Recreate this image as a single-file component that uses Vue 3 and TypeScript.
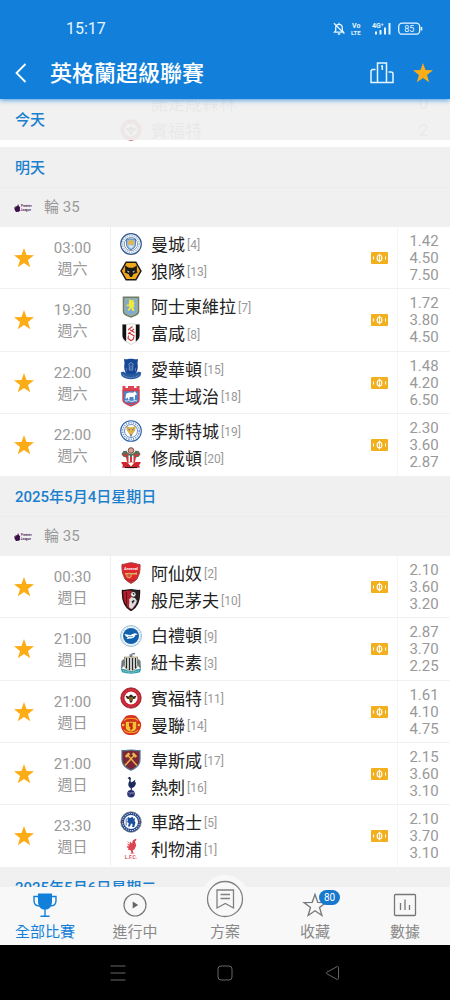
<script setup lang="ts">
interface Team {
  name: string
  rank: number
  crest: string
}

interface Match {
  time: string
  day: string
  home: Team
  away: Team
  odds: string[]
}

interface Matchday {
  date: string
  round: string
  matches: Match[]
}

const team = (name: string, rank: number, crest: string): Team => ({ name, rank, crest })

const matchdays: Matchday[] = [
  {
    date: '明天',
    round: '輪 35',
    matches: [
      { time: '03:00', day: '週六', home: team('曼城', 4, 'mci'), away: team('狼隊', 13, 'wol'), odds: ['1.42', '4.50', '7.50'] },
      { time: '19:30', day: '週六', home: team('阿士東維拉', 7, 'avl'), away: team('富咸', 8, 'ful'), odds: ['1.72', '3.80', '4.50'] },
      { time: '22:00', day: '週六', home: team('愛華頓', 15, 'eve'), away: team('葉士域治', 18, 'ips'), odds: ['1.48', '4.20', '6.50'] },
      { time: '22:00', day: '週六', home: team('李斯特城', 19, 'lei'), away: team('修咸頓', 20, 'sou'), odds: ['2.30', '3.60', '2.87'] },
    ],
  },
  {
    date: '2025年5月4日星期日',
    round: '輪 35',
    matches: [
      { time: '00:30', day: '週日', home: team('阿仙奴', 2, 'ars'), away: team('般尼茅夫', 10, 'bou'), odds: ['2.10', '3.60', '3.20'] },
      { time: '21:00', day: '週日', home: team('白禮頓', 9, 'bha'), away: team('紐卡素', 3, 'new'), odds: ['2.87', '3.70', '2.25'] },
      { time: '21:00', day: '週日', home: team('賓福特', 11, 'bre'), away: team('曼聯', 14, 'mun'), odds: ['1.61', '4.10', '4.75'] },
      { time: '21:00', day: '週日', home: team('韋斯咸', 17, 'whu'), away: team('熱刺', 16, 'tot'), odds: ['2.15', '3.60', '3.10'] },
      { time: '23:30', day: '週日', home: team('車路士', 5, 'che'), away: team('利物浦', 1, 'liv'), odds: ['2.10', '3.70', '3.10'] },
    ],
  },
  { date: '2025年5月6日星期二', round: '', matches: [] },
]
</script>

<template>
  <div class="app">
    <svg class="sprite" aria-hidden="true">
      <symbol id="i-star" viewBox="0 0 20 20">
        <path fill="#fcac14" d="M10 0l2.5 7.1 7.5.2-6 4.6 2.200 7.300L10 14.900l-6.200 4.300L6 11.900 0 7.300l7.500-.2z" />
      </symbol>
      <symbol id="i-cash" viewBox="0 0 17 12">
        <rect width="17" height="12" rx="1" fill="#f2af1e" />
        <path d="M2.500 4.500v3M14.500 4.500v3" stroke="#fff" stroke-width="1" />
        <ellipse cx="8.500" cy="6" rx="2.300" ry="3" fill="none" stroke="#fff" stroke-width="1.200" />
        <path d="M8.500 1.600v8.800" stroke="#fff" stroke-width=".9" />
      </symbol>

      <symbol id="c-mci" viewBox="0 0 22 22">
        <circle cx="11" cy="11" r="10.300" fill="#fff" stroke="#35598c" stroke-width="1.200" />
        <circle cx="11" cy="11" r="8.300" fill="none" stroke="#a9c4de" stroke-width="1.800" stroke-dasharray="1.500 .8" />
        <circle cx="11" cy="11" r="6.600" fill="#fff" stroke="#35598c" stroke-width=".6" />
        <path d="M6.500 6h9v5.500c0 2.800-2 4.300-4.500 5.200-2.500-.9-4.500-2.400-4.500-5.200z" fill="#8dbce2" stroke="#35598c" stroke-width=".7" />
        <path d="M7.500 11l1-3 2.500-1.500L13.500 8l1 3-.5.800H8z" fill="#e0b658" />
        <path d="M8 12.500h6l-3 3z" fill="#dcebf6" />
      </symbol>
      <symbol id="c-wol" viewBox="0 0 22 22">
        <path d="M5.700 1.500h10.600L21.800 11l-5.500 9.500H5.700L.2 11z" fill="#1c1b1a" />
        <path d="M6.500 3h9l4.600 8-4.600 8h-9l-4.600-8z" fill="#f0a81c" />
        <path d="M5 5.500l4 2.300h4l4-2.300-.2 5.500.7 1.500-4.300 1.800L12 17h-2l-1.200-2.700-4.300-1.800.7-1.500z" fill="#1c1b1a" />
        <path d="M7 10.600l2.700 1.400-1.500.500zM15 10.600l-2.700 1.400 1.500.500z" fill="#fff" />
      </symbol>
      <symbol id="c-avl" viewBox="0 0 22 22">
        <path d="M3.500 1.200h15v14.500c0 3-3.500 3.600-7.500 5.300-4-1.700-7.500-2.300-7.500-5.300z" fill="#7fa9d2" stroke="#707c66" stroke-width="1.500" />
        <path d="M5 3h12v12.500c0 2-3 2.700-6 3.900-3-1.200-6-1.900-6-3.900z" fill="none" stroke="#b3b86f" stroke-width=".7" />
        <path d="M9 3.500l2.700.7 2.500.1-.8 2 1.900 1-1.500.8.600 2.700-1.100.7 1.400 3.800-2.500-.5-1-2.800-2 2.800-1.800-.3 2.100-3.300-.8-1.500-1.700.6-.4-1.600 2.300-.5z" fill="#f2e83b" />
      </symbol>
      <symbol id="c-ful" viewBox="0 0 22 22">
        <path d="M2.500 1.500c3 .8 5-.7 8.500-.7s5.500 1.500 8.500.7v11c0 4.500-4.500 7-8.500 8.900-4-1.900-8.500-4.400-8.500-8.900z" fill="#fff" stroke="#999" stroke-width=".4" />
        <path d="M2.500 1.500l3.700-.1v17.100c-2.200-1.500-3.700-3.300-3.700-6zM19.500 1.500l-3.700-.1v17.100c2.200-1.500 3.700-3.300 3.700-6z" fill="#111" />
        <path d="M12.500 3.500L8 7M14 6l-6 5M14.500 9.500L10 7M14.500 13L9 10M8.500 12.500l-.5 3 3 2 2-1 1-3" fill="none" stroke="#cf3237" stroke-width="1.100" />
      </symbol>
      <symbol id="c-eve" viewBox="0 0 22 22">
        <path d="M4 1c2.500.7 4-.3 7-.3s4.500 1 7 .3l-.5 4c1 5-.2 9-2.500 12H7C4.700 14 3.500 10 4.500 5z" fill="#174895" />
        <path d="M.7 14.500l2.600-.9c3.900 3.400 11.500 3.400 15.400 0l2.600.9-.9 3.500c-5.500 4.300-13.300 4.300-18.800 0z" fill="#285aa0" />
        <path d="M3 17c5 3.400 11 3.400 16 0" stroke="#9db6da" fill="none" stroke-width=".7" stroke-dasharray="1 .7" />
        <path d="M9.300 12V7.500L8.800 6 11 4.500 13.200 6l-.5 1.500V12z" fill="none" stroke="#8ea9d6" stroke-width=".8" />
        <path d="M6.500 10v3M15.500 10v3M11 7v4" stroke="#6688c2" stroke-width=".8" />
      </symbol>
      <symbol id="c-ips" viewBox="0 0 22 22">
        <path d="M2.500 1h3v2h2.500V1h6v2h2.500V1h3v4.500h-17z" fill="#de4452" />
        <path d="M3 5.500h16v9.500c0 3.500-4.500 4-8 6-3.500-2-8-2.500-8-6z" fill="#4a82c4" stroke="#d63c4e" stroke-width="1.400" />
        <path d="M5.500 12.500l.8-4 3-1 3.700.3L15 6.300l2 3.200-2 .8v4.200h-1.500v-2.500H9.500v2.500H8v-2.500l-1 1.500H5.500z" fill="#fff" />
        <path d="M5 15.800c2 1 3-.8 4.500 0s3 .8 4.500 0 2 .5 3 0" stroke="#fff" stroke-width=".9" fill="none" />
        <path d="M7.500 18.300h7" stroke="#d63c4e" stroke-width="1" />
      </symbol>
      <symbol id="c-lei" viewBox="0 0 22 22">
        <circle cx="11" cy="11" r="10.300" fill="#fff" stroke="#2860ae" stroke-width="1.100" />
        <circle cx="11" cy="11" r="8.300" fill="none" stroke="#7da0d0" stroke-width="1.700" stroke-dasharray="1.300 1.100" />
        <circle cx="11" cy="11" r="6.500" fill="#fff" stroke="#2860ae" stroke-width=".7" />
        <path d="M6.500 6l2.800 1.500h3.400L15.500 6l-.6 4.500L13 13l-2 3.500L9 13l-1.900-2.500z" fill="#e3b445" stroke="#9a722d" stroke-width=".3" />
        <path d="M8.500 9.300l1.500.8M13.500 9.300l-1.500.8M11 14v2.500" stroke="#2860ae" stroke-width=".9" />
      </symbol>
      <symbol id="c-sou" viewBox="0 0 22 22">
        <circle cx="11" cy="3.500" r="2.800" fill="#d9a08c" stroke="#5c2d29" stroke-width=".8" />
        <path d="M1.500 7l2-3 3-.3L8 6l3 1 3-1 1.500-2.300 3 .3 2 3-1.500 2.500-5 1.500-3-1-3 1-5-1.500z" fill="#55705a" />
        <path d="M2 6.500l2 1 2.500-1 1.500 2.500-4 .5zM20 6.500l-2 1-2.500-1L14 9l4 .5z" fill="#d5343a" />
        <path d="M6 10h10l-1 5H7z" fill="#d5343a" />
        <path d="M8.500 8.500h1.500v7H8.500zM12 8.500h1.500v7H12z" fill="#fff" />
        <path d="M1 15.500c3.300-1 6 .2 10 .2s6.700-1.200 10-.2l-2 2.700 1 2.300c-6 .9-12 .9-18 0l1-2.300z" fill="#cc252d" />
        <path d="M8 16h6l-3 3.500z" fill="#fff" />
        <path d="M5 20.500h12" stroke="#2b1a1b" stroke-width="1.100" />
      </symbol>
      <symbol id="c-ars" viewBox="0 0 22 22">
        <path d="M2 2.500C5 2.500 8 .8 11 .8s6 1.700 9 1.700c.5 8-1.500 15.500-9 18.900C3.500 18 1.500 10.500 2 2.500z" fill="#df2730" stroke="#9d423f" stroke-width="1" />
        <path d="M5 11h9.500l2.500-.8v2.500l-2.500-.3H5z" fill="#dfb15c" />
        <circle cx="9" cy="13.500" r="2.300" fill="#cf5b38" stroke="#e2b35e" stroke-width="1" />
        <path d="M4.500 16.500c2.500 3 10.500 3 13 0" fill="none" stroke="#a91f2b" />
      </symbol>
      <symbol id="c-bou" viewBox="0 0 22 22">
        <path d="M2.500 1.500C5 2 8 .7 11 .7s6 1.300 8.500.8c.4 8-.5 15.500-8.500 20-8-4.500-8.900-12-8.500-20z" fill="#b91d29" stroke="#181616" stroke-width="1.400" />
        <path d="M12 1.200l6.700.6c.3 7-.7 13.500-7.700 18.200z" fill="#242122" />
        <path d="M6.500 3v13.500" stroke="#5c151b" stroke-width="1" />
        <path d="M9.500 19c-1-4 .500-6-.5-8.500l2.500-2.500 3.500 1 2 3-1.500 3.500-3.500 4.500z" fill="#ddd" />
        <circle cx="13.300" cy="5.300" r="2.600" fill="#fff" stroke="#1b1b1b" stroke-width=".6" />
        <path d="M12.400 4.800l1-1 1.200 1-.6 1.400z" fill="#222" />
        <path d="M11.500 12.500l2-1.500 1.500 1-1.500 1-.5 2z" fill="#242122" />
      </symbol>
      <symbol id="c-bha" viewBox="0 0 22 22">
        <circle cx="11" cy="11" r="10.500" fill="#fff" stroke="#84afd1" stroke-width=".8" />
        <circle cx="11" cy="11" r="9.300" fill="none" stroke="#a5c5e0" stroke-width="1" stroke-dasharray="1 .8" />
        <circle cx="11" cy="11" r="8" fill="#1261ad" />
        <path d="M4.500 9c2.500.2 4.500 1.500 6.500.8l3.500-1.600 1.800.4 1.300 1-2.100.3c-1 2.600-3 3.800-5.500 3.500L6.500 14l1.300-1.800C6 11.800 5 10.500 4.500 9z" fill="#fff" />
        <path d="M8 11.500l5 .2" stroke="#1261ad" stroke-width=".6" />
      </symbol>
      <symbol id="c-new" viewBox="0 0 22 22">
        <path d="M9.500 5h3V2.500h2.500V.8l-3.500.4v1H9.500z" fill="#7a8492" />
        <path d="M4.500 5c2 .5 4 0 6.500 0s4.500.5 6.500 0v8c0 3-3.300 5-6.500 6.300C7.800 18 4.500 16 4.500 13z" fill="#fff" stroke="#817442" stroke-width=".8" />
        <path d="M6.500 6v10.500M9.500 6v12M12.500 6v12M15.500 6v10.500" stroke="#272829" stroke-width="1.500" />
        <path d="M1.500 9l2-2 1.500 3-1.500 4.500L1 17zM20.500 9l-2-2-1.500 3 1.500 4.500L21 17z" fill="#6d7b83" />
        <path d="M.8 16.500l5 1c3 2 7.400 2 10.400 0l5-1-1.200 3.700c-5.500 1.900-12.500 1.900-18 0z" fill="#2f9ba9" />
        <path d="M3 18.700c5 2 11 2 16 0" stroke="#d4ecef" stroke-width=".7" fill="none" stroke-dasharray="1 .7" />
      </symbol>
      <symbol id="c-bre" viewBox="0 0 22 22">
        <circle cx="11" cy="11" r="10.200" fill="#c8202f" stroke="#8e1e2a" stroke-width=".8" />
        <circle cx="11" cy="11" r="8.400" fill="none" stroke="#d85563" stroke-width="1" stroke-dasharray="1 .9" />
        <circle cx="11" cy="11" r="6.500" fill="#fff" />
        <path d="M5.500 8.700L9 9.500l1-1.700h2l1 1.700 3.500-.8-1.500 3-2 .3-1 3.500h-2L9 12l-2-.3z" fill="#2d251b" />
        <path d="M9 11h4M9.400 13h3.200" stroke="#e5a72a" stroke-width=".9" />
      </symbol>
      <symbol id="c-mun" viewBox="0 0 22 22">
        <path d="M6 2c3-1.300 7-1.300 10 0l2.500 3 2.500 4c.6 4-1 8-4 10.500-3.500 2-8.500 2-12 0C2 17 .4 13 1 9l2.500-4z" fill="#d9301f" />
        <path d="M4 6.500c2.500-3 11.500-3 14 0M4 16c2.800 3.500 11.200 3.500 14 0" stroke="#f0a92c" stroke-width="1.200" fill="none" />
        <path d="M5.500 7.500h11v6c0 2.500-2.500 3.800-5.500 4.500-3-.7-5.500-2-5.500-4.500z" fill="#f5c530" stroke="#a5241c" stroke-width=".5" />
        <path d="M9 8.500l2 .5 2-.5-.5 3.500.5 2.500-1 .5-1 2-1-2.500.5-1.500-1.500-.5z" fill="#c5241d" />
        <circle cx="3.200" cy="11" r="1.300" fill="#f4c431" />
        <circle cx="18.800" cy="11" r="1.300" fill="#f4c431" />
      </symbol>
      <symbol id="c-whu" viewBox="0 0 22 22">
        <path d="M2 1.500c3 .7 6-.5 9-.5s6 1.200 9 .5v9c0 5-3.500 8.500-9 10.700C5.500 19 2 15.500 2 10.500z" fill="#7d2736" stroke="#507895" stroke-width="1.200" />
        <path d="M5 16.500L14.500 6M17 16.500L7.500 6" stroke="#e8b449" stroke-width="1.500" />
        <path d="M4.800 7.300l3.500-3.800 2 1.500-3.500 3.800zM17.200 7.300l-3.500-3.800-2 1.500 3.500 3.800z" fill="#ecb951" />
      </symbol>
      <symbol id="c-tot" viewBox="0 0 22 22">
        <circle cx="11" cy="17.700" r="3.800" fill="#27306b" />
        <path d="M8 16.500c2 .7 4 .7 6 0M9 19.500l3-3 2 2" stroke="#9ca4c8" stroke-width=".6" fill="none" />
        <path d="M7.500 2.200l2-1.500 1.500 1.300-.5 3 1 1.500 3.800-2.700-.5 2.700 1.200-.3c0 3-1.500 5.300-4 5.800l-.3 2.500h-1v-2.500C8.500 11.300 8 9 8.500 7l1-2.500-.5-1.500z" fill="#1c2a5c" />
      </symbol>
      <symbol id="c-che" viewBox="0 0 22 22">
        <circle cx="11" cy="11" r="10.300" fill="#1e438b" stroke="#8e8b7f" stroke-width=".7" />
        <circle cx="11" cy="11" r="8.500" fill="none" stroke="#c4d0e4" stroke-width="1.100" stroke-dasharray="1.200 1" />
        <circle cx="11" cy="11" r="7" fill="#fff" />
        <path d="M8 6l2 1 2.500-1.300 1 2 1.500-.7-.5 3 1 1.500-1.300 4.500h-2l.3-3-1.500-.5-1 3H8l.8-3.500L7 11l1-2-.8-1z" fill="#1b509d" />
        <path d="M6.200 7.500v7" stroke="#1b509d" stroke-width=".8" />
        <path d="M2 11h1.300M18.700 11h1.300" stroke="#cf3440" stroke-width="1.300" />
      </symbol>
      <symbol id="c-liv" viewBox="0 0 22 22">
        <path d="M15.500.8l1.200 1L15 3.500l1.200 4-1.500 3.500-2 1.500.5 2 1.500 1H10l1.500-1-.7-2-3-1 .8-1-2.200-1.700L9 8 6.800 5.500l3 1L10 3.500l2 2 .8-3z" fill="#df4550" />
        <path d="M7.800 3.500l2 2M7 8.500l2.500.500" stroke="#e56b71" stroke-width="1" />
      </symbol>
    </svg>

    <header class="header">
      <div class="status">
        <span class="clock">15:17</span>
        <svg class="status-icons" viewBox="0 0 90 16" fill="none" stroke="#e6f5ff" aria-hidden="true">
          <path d="M1.500 11.200h9l-1.200-1.700V6.700C9.300 4.500 8 3.300 6 3.300S2.700 4.500 2.700 6.700v2.800zM6 3.300V1.800M4.800 13h2.400M1 2.300l10.300 10.300" stroke-width="1.300" />
          <g fill="#e6f5ff" stroke="none" font-weight="700">
            <text x="19" y="7" font-size="7">Vo</text>
            <text x="18" y="14" font-size="6">LTE</text>
            <text x="39" y="7" font-size="7">4G⁺</text>
          </g>
          <path d="M43 13.500v-3M47.500 13.500V9M52 13.500V6.500M56.500 13.500V2" stroke-width="2" />
          <rect x="65.700" y="2.200" width="21" height="11" rx="3.500" stroke-width="1.300" />
          <path d="M88.500 6v3.500" stroke-width="1.600" />
          <text x="76.200" y="11.100" text-anchor="middle" font-size="9" fill="#e6f5ff" stroke="none">85</text>
        </svg>
      </div>
      <div class="title-bar">
        <button class="icon-btn back" aria-label="返回">
          <svg viewBox="0 0 12 20" fill="none" stroke="#fff" stroke-width="1.800"><path d="M10.500 1L1.500 10l9 9" /></svg>
        </button>
        <h1>英格蘭超級聯賽</h1>
        <button class="icon-btn podium" aria-label="積分榜">
          <svg viewBox="0 0 24 22" fill="none" stroke="#e6f5ff" stroke-width="1.500">
            <path d="M7.500 20.500V1h9v19.500M5.500 7.500H3c-1.300 0-2 .6-2 2v11h22v-8.500c0-1.300-.8-2-2-2h-2.500M11 4.500l1.300-.5v4" />
          </svg>
        </button>
        <button class="icon-btn fav" aria-label="收藏聯賽"><svg><use href="#i-star" /></svg></button>
      </div>
    </header>

    <main class="list">
      <section class="today">
        <div class="scrolled">
          <span class="under-name">諾定咸森林</span><span class="under-score">0</span>
          <span class="under-name"><svg class="under-crest" aria-hidden="true"><use href="#c-bre" /></svg>賓福特</span><span class="under-score">2</span>
        </div>
        <h2 class="date veil">今天</h2>
      </section>

      <section v-for="group in matchdays" :key="group.date">
        <h2 class="date">{{ group.date }}</h2>
        <div v-if="group.round" class="round">
          <svg viewBox="0 0 18 10" role="img" aria-label="Premier League">
            <path fill="#3b1047" d="M.3 4L1.500 4.500 1.700 2.700l1.300.7L4.200 1l.6 2 1.300 1.300-.3 2.200.6.900-1.600 1.300L2 9 .6 6.800z" />
            <g font-size="3" font-weight="700" fill="#4d2257">
              <text x="7" y="4">Premier</text>
              <text x="7" y="8">League</text>
            </g>
          </svg>
          <span>{{ group.round }}</span>
        </div>
        <article v-for="match in group.matches" :key="match.home.name" class="match">
          <button class="icon-btn star" :aria-label="`收藏 ${match.home.name}`"><svg><use href="#i-star" /></svg></button>
          <div class="when">
            <time>{{ match.time }}</time>
            <span>{{ match.day }}</span>
          </div>
          <div class="teams">
            <div v-for="side in [match.home, match.away]" :key="side.name" class="team">
              <svg class="crest" viewBox="0 0 22 22" aria-hidden="true">
                <use :href="`#c-${side.crest}`" />
                <text v-if="side.crest === 'ars'" x="11" y="8" text-anchor="middle" font-size="4" font-weight="700" fill="#fff">Arsenal</text>
                <text v-if="side.crest === 'liv'" x="11" y="21" text-anchor="middle" font-size="5" font-weight="700" fill="#e0555f">L.F.C.</text>
              </svg>
              <span class="name">{{ side.name }}</span>
              <span class="rank">[{{ side.rank }}]</span>
            </div>
          </div>
          <svg class="cash" aria-hidden="true"><use href="#i-cash" /></svg>
          <div class="odds">
            <span v-for="(odd, i) in match.odds" :key="i">{{ odd }}</span>
          </div>
        </article>
      </section>
    </main>

    <nav class="tabs">
      <button class="tab active">
        <svg class="tab-icon" viewBox="0 0 26 26">
          <path d="M6 1.500h14v8c0 4.500-2.500 7.500-5.500 8h-3C8.500 17 6 14 6 9.500z" fill="#1280da" />
          <path d="M6 4.500H2v4c0 3.500 2 5.500 5.500 5.500M20 4.500h4v4c0 3.500-2 5.500-5.500 5.500M8.500 24.300h9M13 17v7" fill="none" stroke="#1280da" stroke-width="1.400" />
        </svg>
        <span class="label">全部比賽</span>
      </button>
      <button class="tab">
        <svg class="tab-icon" viewBox="0 0 26 26">
          <circle cx="13" cy="13" r="11" fill="none" stroke="#777" stroke-width="1.200" />
          <path d="M10.700 9.500l5.500 3.500-5.500 3.500z" fill="#666" />
        </svg>
        <span class="label">進行中</span>
      </button>
      <button class="tab raised">
        <svg class="tab-icon" viewBox="0 0 38 38" fill="none" stroke="#808080">
          <circle cx="19" cy="19" r="17.500" stroke-width="1.300" />
          <path d="M11 10h16.500v18l-8.200-4.500L11 28zM14.500 14.500h9.500M14.500 18.500h9.500" stroke-width="1.300" />
        </svg>
        <span class="label">方案</span>
      </button>
      <button class="tab">
        <span class="badged">
          <svg class="tab-icon" viewBox="0 0 26 26" fill="none" stroke="#777" stroke-width="1.300">
            <path d="M13 2.500l2.800 7.800 8.200.2-6.500 5 2.400 8L13 18.800l-6.900 4.700 2.400-8-6.500-5 8.200-.2z" />
          </svg>
          <span class="badge">80</span>
        </span>
        <span class="label">收藏</span>
      </button>
      <button class="tab">
        <svg class="tab-icon" viewBox="0 0 26 26" fill="none" stroke="#777" stroke-width="1.300">
          <rect x="2.500" y="2.500" width="21" height="21" rx="1" />
          <path d="M8.500 11v7M13 7.500V18M17.500 13v5" />
        </svg>
        <span class="label">數據</span>
      </button>
    </nav>

    <footer class="system">
      <button aria-label="最近"><svg viewBox="0 0 20 20"><path d="M2.500 3h15M2.500 10h15M2.500 17h15" /></svg></button>
      <button aria-label="主畫面"><svg viewBox="0 0 20 20"><rect x="3" y="3" width="14" height="14" rx="3" /></svg></button>
      <button aria-label="返回"><svg viewBox="0 0 20 20"><path d="M16.500 4.500v11c0 1-.8 1.300-1.600.8l-10-5.500c-.8-.5-.8-1.100 0-1.600l10-5.500c.8-.5 1.600-.2 1.600.8z" /></svg></button>
    </footer>
  </div>
</template>

<style>
body {
  margin: 0;
}
</style>

<style scoped>
.app {
  display: flex;
  flex-direction: column;
  height: 100vh;
  overflow: hidden;
  background: #fff;
  color: #222;
  font-family: Roboto, "Noto Sans CJK TC", sans-serif;
}

button {
  margin: 0;
  padding: 0;
  border: 0;
  background: none;
  color: inherit;
  font: inherit;
  cursor: pointer;
}

svg {
  display: block;
}

h1,
h2 {
  margin: 0;
}

.sprite {
  position: absolute;
  width: 0;
  height: 0;
}

.header {
  position: relative;
  z-index: 2;
  flex: none;
  background: #1280da;
  color: #fff;
  box-shadow: 0 1px 5px rgba(18, 128, 218, 0.8);
}

.status {
  display: flex;
  justify-content: space-between;
  align-items: center;
  padding: 18px 27px 7px 66px;
  line-height: 22px;
}

.clock {
  font-size: 16px;
  color: #e6f5ff;
}

.status-icons {
  width: 90px;
  height: 16px;
}

.title-bar {
  display: flex;
  align-items: center;
  height: 52px;
  padding: 0 17px 0 15px;
}

.icon-btn {
  display: flex;
  align-items: center;
  justify-content: center;
}

.back svg {
  width: 12px;
  height: 20px;
}

.title-bar h1 {
  flex: 1;
  padding: 2px 0 0 23px;
  font-size: 22px;
  font-weight: 500;
  line-height: 30px;
}

.podium svg {
  width: 24px;
  height: 22px;
}

.fav {
  margin-left: 19px;
}

.fav svg,
.star svg {
  width: 20px;
  height: 20px;
}

.list {
  flex: 1;
  min-height: 0;
  overflow: hidden;
}

.today {
  position: relative;
  padding-bottom: 7px;
}

.scrolled {
  position: absolute;
  inset: 0;
  display: grid;
  grid-template-columns: 1fr 53px;
  grid-auto-rows: 27px;
  align-content: end;
  align-items: center;
  padding-bottom: 4px;
  color: #555;
  font-size: 17px;
}

.under-name {
  position: relative;
  padding-left: 151px;
}

.under-crest {
  position: absolute;
  top: 2px;
  left: 120px;
  width: 22px;
  height: 22px;
}

.under-score {
  text-align: center;
}

.date {
  padding: 3px 0 0 15px;
  border-bottom: 1px solid #ececec;
  background: #f0f0f0;
  color: #1a7fcd;
  font-size: 15px;
  font-weight: 500;
  line-height: 37px;
}

.veil {
  position: relative;
  border-bottom-color: transparent;
  background: rgba(240, 240, 240, 0.95);
}

.round {
  display: flex;
  align-items: center;
  gap: 12px;
  padding-left: 14px;
  background: #f0f0f0;
  color: #999;
  font-size: 15px;
  line-height: 39px;
}

.round svg {
  width: 18px;
  height: 10px;
}

.match {
  display: grid;
  grid-template-columns: 48px 62px 1fr 26px 53px;
  align-items: center;
  box-sizing: border-box;
  min-height: 62px;
  border-bottom: 1px solid #f0f0f0;
}

.match:nth-of-type(4n + 2) {
  min-height: 63px;
}

.match:last-child {
  border-bottom-color: transparent;
}

.when {
  display: flex;
  flex-direction: column;
  padding: 2px 13px 0 0;
  color: #999;
  font-size: 15px;
  line-height: 21px;
  text-align: center;
}

.teams {
  display: flex;
  flex-direction: column;
  justify-content: center;
  align-self: stretch;
  padding-left: 9px;
  border-left: 1px solid #f0f0f0;
}

.team {
  display: flex;
  align-items: center;
  height: 27px;
}

.crest {
  width: 22px;
  height: 22px;
  margin-right: 9px;
}

.name {
  padding-top: 2px;
  font-size: 17px;
  line-height: 25px;
}

.rank {
  margin-left: 2px;
  padding-top: 2px;
  color: #999;
  font-size: 12px;
}

.cash {
  width: 17px;
  height: 12px;
}

.odds {
  display: flex;
  flex-direction: column;
  justify-content: center;
  align-self: stretch;
  padding-top: 1px;
  border-left: 1px solid #f5f5f5;
  color: #999;
  font-size: 15px;
  line-height: 17px;
  text-align: center;
}

.tabs {
  position: relative;
  z-index: 1;
  display: grid;
  grid-template-columns: repeat(5, 1fr);
  flex: none;
  background: #f8f8f8;
}

.tab {
  display: flex;
  flex-direction: column;
  align-items: center;
  gap: 4px;
  padding: 5px 0 3px;
  color: #888;
  font-size: 15px;
  line-height: 20px;
}

.tab.active {
  color: #1280da;
}

.tab-icon {
  width: 26px;
  height: 26px;
}

.raised .tab-icon {
  width: 38px;
  height: 38px;
  margin-top: -12px;
  border-radius: 50%;
  background: #f8f8f8;
  box-shadow: 0 0 0 5px #f8f8f8;
}

.badged {
  position: relative;
}

.badge {
  position: absolute;
  top: -2px;
  left: 17px;
  padding: 0 5px;
  border-radius: 8px;
  background: #1878cc;
  color: #fff;
  font-size: 10px;
  line-height: 15px;
}

.system {
  display: flex;
  flex: none;
  align-items: center;
  justify-content: center;
  gap: 87px;
  height: 55px;
  background: #000;
}

.system svg {
  width: 20px;
  height: 20px;
  fill: none;
  stroke: #666;
  stroke-width: 1px;
}
</style>
